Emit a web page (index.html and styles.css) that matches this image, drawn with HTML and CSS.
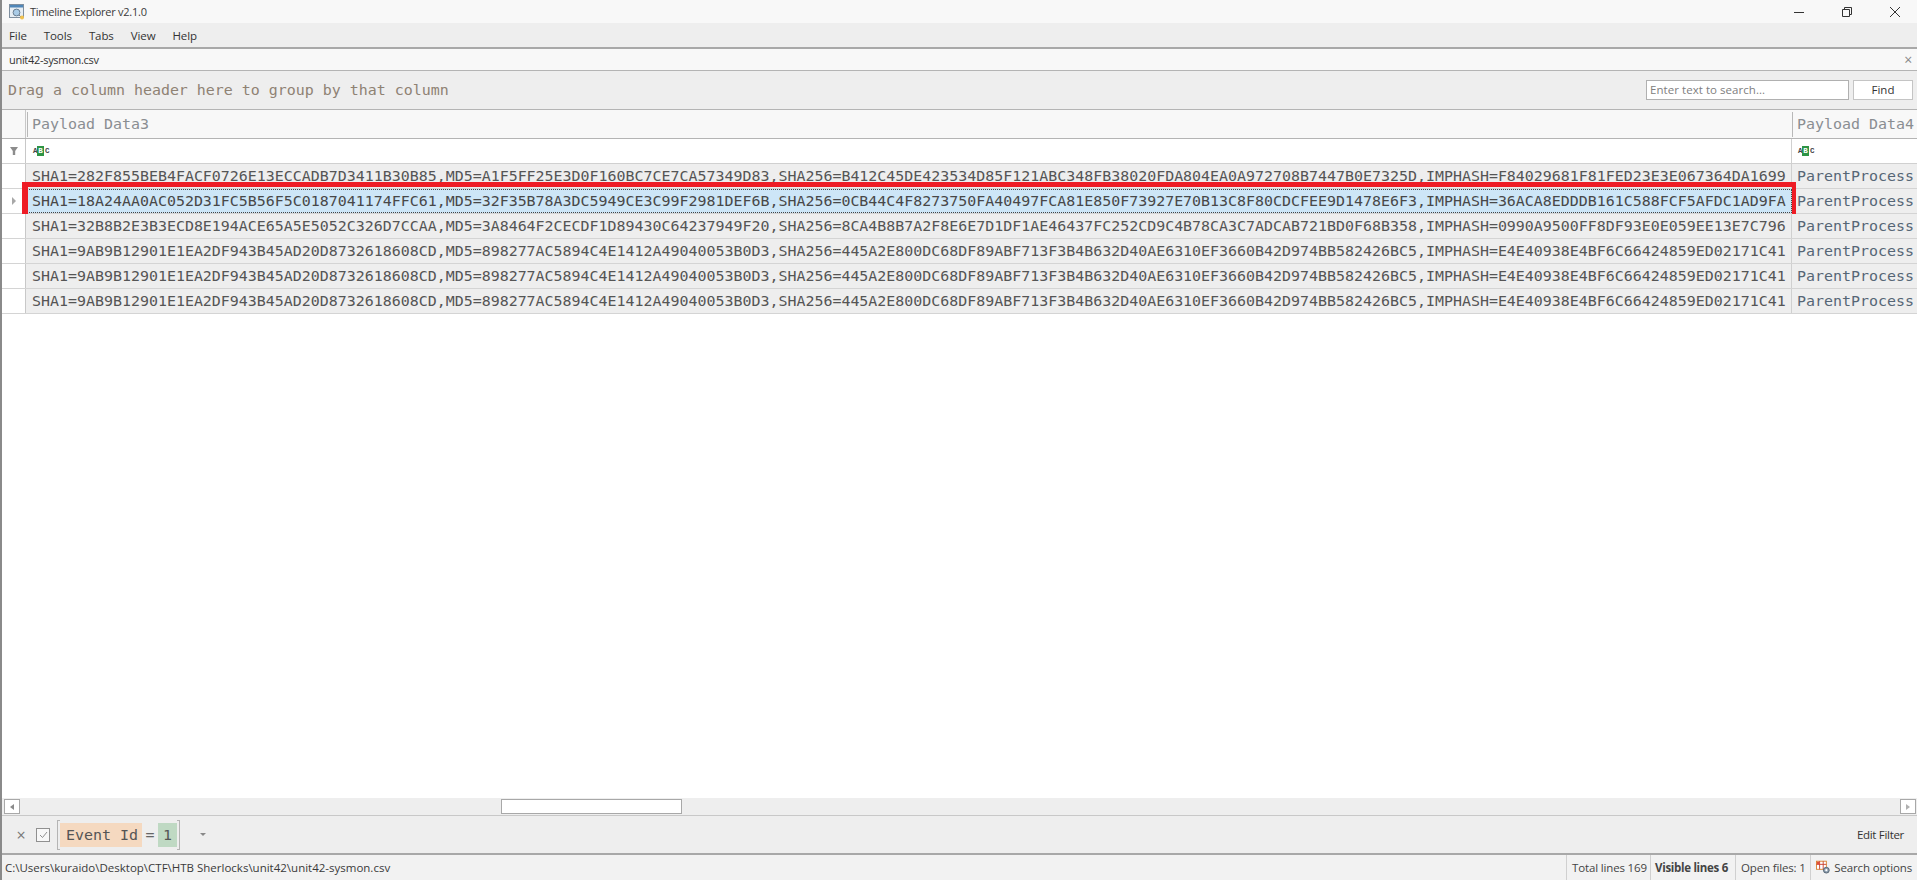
FILE: index.html
```html
<!DOCTYPE html>
<html lang="en">
<head>
<meta charset="utf-8">
<title>Timeline Explorer v2.1.0</title>
<link rel="stylesheet" href="styles.css">
</head>
<body>
<div class="window">
  <header class="titlebar">
    <svg class="app-icon" width="16" height="16" viewBox="0 0 16 16"><rect x="0.5" y="0.5" width="14" height="13" fill="#e6edf3" stroke="#7f8f9f"/><rect x="1" y="1" width="13" height="2.5" fill="#4f86b8"/><circle cx="7.5" cy="8.5" r="3.4" fill="#a9cbe6" stroke="#6b7f92"/><path d="M10 11l2 2" stroke="#6b7f92"/><circle cx="13" cy="13.5" r="2" fill="#f2c14e"/></svg>
    <span class="app-title">Timeline Explorer v2.1.0</span>
    <div class="winctl">
      <svg width="12" height="12" viewBox="0 0 12 12"><path d="M1 6.5h10" stroke="#333" fill="none"/></svg>
      <svg width="12" height="12" viewBox="0 0 12 12"><path d="M1.5 3.5h7v7h-7zM3.5 3.5v-2h7v7h-2" stroke="#333" fill="none"/></svg>
      <svg width="12" height="12" viewBox="0 0 12 12"><path d="M1 1l10 10M11 1L1 11" stroke="#333" fill="none"/></svg>
    </div>
  </header>
  <nav class="menubar">
    <span>File</span><span>Tools</span><span>Tabs</span><span>View</span><span>Help</span>
  </nav>
  <div class="main">
    <div class="tabstrip">
      <span class="tab-name">unit42-sysmon.csv</span>
      <span class="tab-close">×</span>
    </div>
    <div class="grouppanel">
      <span class="group-hint">Drag a column header here to group by that column</span>
      <div class="searchbox">Enter text to search...</div>
      <div class="findbtn">Find</div>
    </div>
    <div class="grid">
      <div class="row header-row">
        <div class="indicator"></div>
        <div class="cell col3 head"><span class="grip"></span>Payload Data3</div>
        <div class="cell col4 head"><span class="grip"></span>Payload Data4</div>
      </div>
      <div class="row filter-row">
        <div class="indicator"><svg width="10" height="10" viewBox="0 0 10 10"><path d="M1 1h8L6.2 5v4H3.8V5z" fill="#8c8c8c"/></svg></div>
        <div class="cell col3"><span class="abc"><i>A</i><b>B</b><i>C</i></span></div>
        <div class="cell col4"><span class="abc"><i>A</i><b>B</b><i>C</i></span></div>
      </div>
      <div class="row data">
        <div class="indicator"></div>
        <div class="cell col3">SHA1=282F855BEB4FACF0726E13ECCADB7D3411B30B85,MD5=A1F5FF25E3D0F160BC7CE7CA57349D83,SHA256=B412C45DE423534D85F121ABC348FB38020FDA804EA0A972708B7447B0E7325D,IMPHASH=F84029681F81FED23E3E067364DA1699</div>
        <div class="cell col4">ParentProcess:</div>
      </div>
      <div class="row data current">
        <div class="indicator"><span class="arrow"></span></div>
        <div class="cell col3 selected">SHA1=18A24AA0AC052D31FC5B56F5C0187041174FFC61,MD5=32F35B78A3DC5949CE3C99F2981DEF6B,SHA256=0CB44C4F8273750FA40497FCA81E850F73927E70B13C8F80CDCFEE9D1478E6F3,IMPHASH=36ACA8EDDDB161C588FCF5AFDC1AD9FA</div>
        <div class="cell col4">ParentProcess:</div>
        <div class="redbox"></div>
      </div>
      <div class="row data">
        <div class="indicator"></div>
        <div class="cell col3">SHA1=32B8B2E3B3ECD8E194ACE65A5E5052C326D7CCAA,MD5=3A8464F2CECDF1D89430C64237949F20,SHA256=8CA4B8B7A2F8E6E7D1DF1AE46437FC252CD9C4B78CA3C7ADCAB721BD0F68B358,IMPHASH=0990A9500FF8DF93E0E059EE13E7C796</div>
        <div class="cell col4">ParentProcess:</div>
      </div>
      <div class="row data">
        <div class="indicator"></div>
        <div class="cell col3">SHA1=9AB9B12901E1EA2DF943B45AD20D8732618608CD,MD5=898277AC5894C4E1412A49040053B0D3,SHA256=445A2E800DC68DF89ABF713F3B4B632D40AE6310EF3660B42D974BB582426BC5,IMPHASH=E4E40938E4BF6C66424859ED02171C41</div>
        <div class="cell col4">ParentProcess:</div>
      </div>
      <div class="row data">
        <div class="indicator"></div>
        <div class="cell col3">SHA1=9AB9B12901E1EA2DF943B45AD20D8732618608CD,MD5=898277AC5894C4E1412A49040053B0D3,SHA256=445A2E800DC68DF89ABF713F3B4B632D40AE6310EF3660B42D974BB582426BC5,IMPHASH=E4E40938E4BF6C66424859ED02171C41</div>
        <div class="cell col4">ParentProcess:</div>
      </div>
      <div class="row data">
        <div class="indicator"></div>
        <div class="cell col3">SHA1=9AB9B12901E1EA2DF943B45AD20D8732618608CD,MD5=898277AC5894C4E1412A49040053B0D3,SHA256=445A2E800DC68DF89ABF713F3B4B632D40AE6310EF3660B42D974BB582426BC5,IMPHASH=E4E40938E4BF6C66424859ED02171C41</div>
        <div class="cell col4">ParentProcess:</div>
      </div>
    </div>
    <div class="hscroll">
      <div class="sbtn"><span class="tri-left"></span></div>
      <div class="track"><div class="thumb"></div></div>
      <div class="sbtn"><span class="tri-right"></span></div>
    </div>
    <div class="filterpanel">
      <span class="fclose">×</span>
      <span class="fcheck"><svg width="9" height="8" viewBox="0 0 9 8"><path d="M1 4l2.5 2.5L8 1" stroke="#909090" fill="none"/></svg></span>
      <div class="expr">
        <span class="brk brk-l"></span>
        <span class="chip-field">Event Id</span>
        <span class="op">=</span>
        <span class="chip-value">1</span>
        <span class="brk brk-r"></span>
      </div>
      <span class="fdrop"></span>
      <span class="editfilter">Edit Filter</span>
    </div>
  </div>
  <footer class="statusbar">
    <span class="path">C:\Users\kuraido\Desktop\CTF\HTB Sherlocks\unit42\unit42-sysmon.csv</span>
    <span class="st st-total">Total lines 169</span>
    <span class="st st-visible">Visible lines 6</span>
    <span class="st st-open">Open files: 1</span>
    <span class="st st-search">
      <svg width="17" height="17" viewBox="0 0 17 17"><rect x="0.5" y="1.5" width="11" height="9" fill="#fff" stroke="#d9822b"/><path d="M0.5 5h11M4 1.5v9M8 1.5v9" stroke="#c8402a" fill="none"/><rect x="1" y="2" width="3" height="3" fill="#e2503a"/><circle cx="11.5" cy="11.5" r="3.2" fill="#8fa0b0" stroke="#50606e"/><circle cx="11.5" cy="11.5" r="1.2" fill="#fff"/></svg>
      Search options
    </span>
  </footer>
</div>
</body>
</html>
```
FILE: styles.css
```css
* { box-sizing: border-box; }
html, body { margin: 0; height: 100%; overflow: hidden; }
body { font-family: "Open Sans", "Noto Sans", sans-serif; font-size: 12px; color: #333; background: #fff; }

.window { display: flex; flex-direction: column; height: 880px; width: 1917px; border-left: 2px solid #8a8a8a; }

.titlebar { flex: 0 0 23px; display: flex; align-items: center; background: #f8f8f8; padding-left: 7px; }
.app-icon { margin-right: 5px; }
.app-title { font-size: 11px; letter-spacing: -0.25px; color: #3a3a3a; }
.winctl { margin-left: auto; display: flex; gap: 36px; padding-right: 16px; }

.menubar { flex: 0 0 26px; display: flex; align-items: center; gap: 17px; background: #eeeeee; padding-left: 7px; font-size: 11.5px; letter-spacing: -0.1px; color: #333; border-bottom: 2px solid #a8a8a8; }

.main { flex: 1; min-height: 0; display: flex; flex-direction: column; }

.tabstrip { flex: 0 0 22px; display: flex; align-items: center; justify-content: space-between; background: #f8f8f8; border-bottom: 1px solid #b4b4b4; padding: 0 5px 0 7px; font-size: 11px; letter-spacing: -0.3px; }
.tab-close { color: #888; font-size: 14px; }

.grouppanel { flex: 0 0 39px; display: flex; align-items: center; background: #eeeeee; border-bottom: 1px solid #b4b4b4; padding: 0 4px 0 6px; }
.group-hint { font-family: "DejaVu Sans Mono", monospace; font-size: 14.95px; color: #8f8274; margin-right: auto; }
.searchbox { width: 203px; height: 20px; margin-right: 4px; background: #fff; border: 1px solid #b0b0b0; padding-left: 3px; font-size: 11.5px; line-height: 18px; color: #808080; letter-spacing: 0.05px; white-space: nowrap; }
.findbtn { width: 60px; height: 20px; background: #fff; border: 1px solid #c4c4c4; text-align: center; font-size: 11.5px; line-height: 18px; }

.grid { flex: 1; min-height: 0; display: flex; flex-direction: column; font-family: "DejaVu Sans Mono", monospace; font-size: 14.95px; }
.row { display: flex; position: relative; flex: 0 0 25px; }
.indicator { flex: 0 0 24px; display: flex; align-items: center; justify-content: center; border-right: 1px solid #c8c8c8; }
.cell { display: flex; align-items: center; white-space: nowrap; overflow: hidden; padding-left: 6px; }
.col3 { flex: 0 0 1766px; border-right: 1px solid #d0d0d0; }
.col4 { flex: 1; padding-left: 5px; }

.header-row { flex: 0 0 29px; background: #f8f8f8; border-bottom: 1px solid #b4b4b4; }
.head { color: #8a8e92; }
.grip { width: 1px; height: 25px; background: #b8b8b8; margin-right: 4px; flex: none; }
.col3.head { padding-left: 0; margin-left: 1px; flex-basis: 1765px; border-right: 0; }
.col4.head { padding-left: 0; }

.filter-row { flex: 0 0 25px; background: #fff; border-bottom: 1px solid #d0d0d0; }
.abc { display: inline-flex; align-items: center; font-family: "Liberation Mono", monospace; font-size: 7.5px; font-weight: 700; height: 10px; color: #444; margin-left: 1px; }
.abc i { font-style: normal; width: 4px; }
.abc b { background: #2e9445; color: #fff; width: 7px; height: 10px; margin: 0 1px 0 0; line-height: 10px; text-align: center; }

.data { background: #eeeeee; border-bottom: 1px solid #d4d4d4; color: #555555; }
.data .indicator { background: #fff; }
.data .col4 { color: #566676; }
.arrow { width: 0; height: 0; border-left: 4px solid #a8a8a8; border-top: 4px solid transparent; border-bottom: 4px solid transparent; }
.selected { background: #cde6f7; outline: 1px dotted #444; outline-offset: -1px; color: #484848; }
.redbox { position: absolute; left: 20px; top: -7px; width: 1774px; height: 38px; border: 5px solid #ee1c25; border-left-width: 6px; border-right-width: 4px; pointer-events: none; }

.hscroll { flex: 0 0 18px; display: flex; align-items: center; background: #eeeeee; border-bottom: 1px solid #c8c8c8; padding: 0 1px 0 2px; }
.sbtn { flex: 0 0 16px; height: 15px; background: #fff; border: 1px solid #a8a8a8; display: flex; align-items: center; justify-content: center; }
.tri-left { width: 0; height: 0; border-right: 4px solid #8a8a8a; border-top: 3px solid transparent; border-bottom: 3px solid transparent; }
.tri-right { width: 0; height: 0; border-left: 4px solid #b0b0b0; border-top: 3px solid transparent; border-bottom: 3px solid transparent; }
.track { flex: 1; padding-left: 481px; }
.thumb { width: 181px; height: 15px; background: #fff; border: 1px solid #a8a8a8; }

.filterpanel { flex: 0 0 39px; display: flex; align-items: center; background: #eeeeee; border-bottom: 2px solid #a8a8a8; padding-left: 14px; }
.fclose { width: 10px; text-align: center; font-size: 16px; color: #777; margin-right: 10px; line-height: 1; }
.fcheck { width: 14px; height: 14px; background: #f8f8f8; border: 1px solid #909090; display: flex; align-items: center; justify-content: center; margin-right: 7px; }
.expr { display: flex; align-items: center; font-family: "DejaVu Sans Mono", monospace; font-size: 14.95px; }
.brk { width: 3px; height: 30px; border: 1px solid #b4b4b4; }
.brk-l { border-right: 0; }
.brk-r { border-left: 0; }
.chip-field { background: #f5d9c0; height: 24px; line-height: 24px; padding-left: 6px; width: 82px; color: #555555; white-space: nowrap; }
.op { width: 16px; text-align: center; color: #666; }
.chip-value { background: #bfd9c3; height: 24px; line-height: 24px; width: 19px; text-align: center; color: #555555; }
.fdrop { width: 0; height: 0; margin-left: 20px; border-top: 3px solid #888; border-left: 3px solid transparent; border-right: 3px solid transparent; }
.editfilter { margin-left: auto; padding-right: 13px; font-size: 11.5px; letter-spacing: -0.3px; }

.statusbar { flex: 0 0 25px; display: flex; align-items: stretch; background: #f2f2f2; font-size: 11.5px; letter-spacing: -0.15px; white-space: nowrap; }
.path { margin-right: auto; padding-left: 3px; align-self: center; color: #3a3a3a; letter-spacing: 0; }
.st { display: flex; align-items: center; padding: 0 5px; border-left: 1px solid #d0d0d0; color: #444; }
.st-total { width: 84px; }
.st-visible { width: 85px; font-weight: 700; letter-spacing: -0.3px; padding-left: 4px; }
.st-open { width: 75px; }
.st-search { width: 107px; gap: 3px; }
```
